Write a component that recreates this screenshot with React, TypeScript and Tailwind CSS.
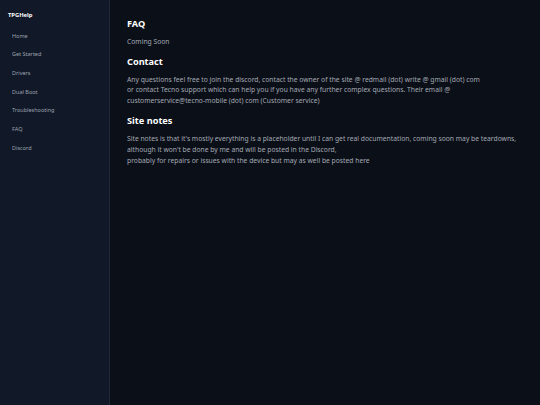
import React from "react";

const nav = ["Home", "Get Started", "Drivers", "Dual Boot", "Troubleshooting", "FAQ", "Discord"];

export default function App() {
  return (
    <div className="flex h-[405px] w-[540px] overflow-hidden bg-[#0b0f18] text-[#c4c9d1]" style={{ fontFamily: '"Noto Sans", "Open Sans", sans-serif' }}>
      <aside className="flex w-[110px] shrink-0 flex-col border-r border-[#1f2937] bg-[#111827] px-[8px] pt-[11px]">
        <div className="text-[5.8px] font-bold leading-[9px] text-white">TPGHelp</div>
        <nav className="mt-[7px] flex flex-col">
          {nav.map((n) => (
            <div key={n} className="px-[4px] py-[4.5px] text-[5.5px] leading-[9.67px] text-[#9ca3af]">
              {n}
            </div>
          ))}
        </nav>
      </aside>
      <main className="flex-1 px-[17px] pt-[18px]">
        <h2 className="text-[9.2px] font-bold leading-[12px] text-white">FAQ</h2>
        <p className="mt-[7px] text-[6.75px] leading-[10.7px] text-[#a3a9b3]">Coming Soon</p>
        <h2 className="mt-[8px] text-[9.2px] font-bold leading-[12px] text-white">Contact</h2>
        <p className="mt-[7px] text-[6.75px] leading-[10.7px] text-[#a3a9b3]">
          Any questions feel free to join the discord, contact the owner of the site @ redmail (dot) write @ gmail (dot) com
          <br />
          or contact Tecno support which can help you if you have any further complex questions. Their email @ customerservice@tecno-mobile (dot) com (Customer service)
        </p>
        <h2 className="mt-[8.5px] text-[9.2px] font-bold leading-[12px] text-white">Site notes</h2>
        <p className="mt-[7px] text-[6.75px] leading-[10.7px] text-[#a3a9b3]">
          Site notes is that it's mostly everything is a placeholder until I can get real documentation, coming soon may be teardowns,
          <br />
          although it won't be done by me and will be posted in the Discord,
          <br />
          probably for repairs or issues with the device but may as well be posted here
        </p>
      </main>
    </div>
  );
}
